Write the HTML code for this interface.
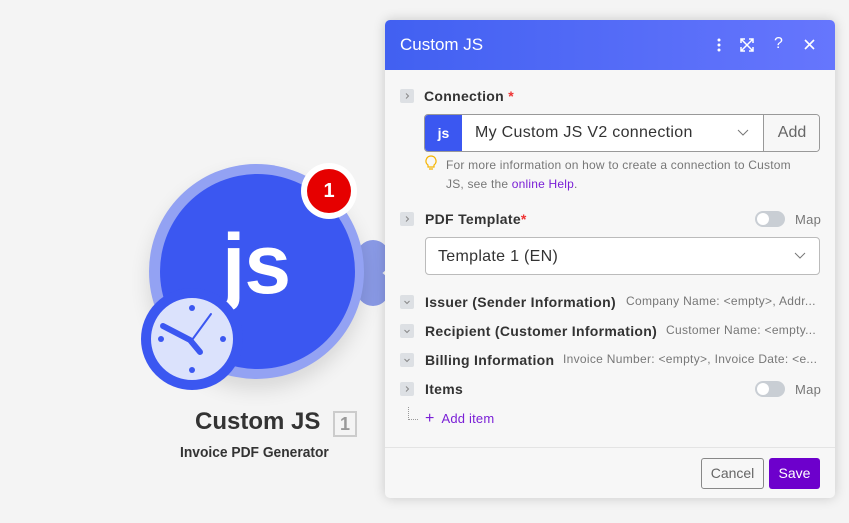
<!DOCTYPE html>
<html><head><style>
*{box-sizing:border-box;margin:0;padding:0}
body{width:849px;height:523px;background:#f4f4f4;font-family:"Liberation Sans",sans-serif;position:relative;overflow:hidden}
.abs{position:absolute}
.panel{left:385px;top:20px;width:450px;height:478px;background:#f7f7f7;border-radius:5px;box-shadow:0 0 12px rgba(0,0,0,.18);overflow:hidden}
.hdr{height:50px;background:linear-gradient(90deg,#4160f1,#6676fd);color:#fff;font-size:17px;padding:15px 0 0 15px}
.lbl{font-size:14px;font-weight:bold;color:#333;letter-spacing:.3px;white-space:nowrap}
.chev{width:14px;height:14px;background:#dde0e4;border-radius:2px}
.chev svg{position:absolute;left:3px;top:3px}
.sub{font-size:12px;color:#777;white-space:nowrap;letter-spacing:.3px}
.tog{width:30px;height:16px;border-radius:8px;background:#c9ced4}
.tog:after{content:"";position:absolute;left:2px;top:2px;width:12px;height:12px;border-radius:6px;background:#fff}
</style></head><body>
<!-- node -->
<div class="abs" style="left:356px;top:240px;width:34px;height:36px;border-radius:50%;background:#8a9ae6"></div>
<div class="abs" style="left:356px;top:270px;width:34px;height:36px;border-radius:50%;background:#8a9ae6"></div>
<div class="abs" style="left:149px;top:164px;width:215px;height:215px;border-radius:50%;background:#93a2f3;box-shadow:0 10px 20px rgba(0,0,0,.12)"></div>
<div class="abs" style="left:160px;top:174px;width:195px;height:195px;border-radius:50%;background:#3b57f1"></div>
<div class="abs" style="left:222px;top:222px;color:#fff;font-size:84px;font-weight:bold;letter-spacing:-1px;line-height:84px">js</div>
<div class="abs" style="left:301px;top:163px;width:56px;height:56px;border-radius:50%;background:#fff"></div>
<div class="abs" style="left:307px;top:169px;width:44px;height:44px;border-radius:50%;background:#e60000;color:#fff;font-weight:bold;font-size:20px;text-align:center;line-height:44px">1</div>
<svg class="abs" style="left:140px;top:287px" width="104" height="104" viewBox="0 0 104 104">
<circle cx="52" cy="52" r="46" fill="#dbe2fc" stroke="#3b57f1" stroke-width="10"/>
<circle cx="52" cy="21" r="3" fill="#3b57f1"/><circle cx="52" cy="83" r="3" fill="#3b57f1"/>
<circle cx="21" cy="52" r="3" fill="#3b57f1"/><circle cx="83" cy="52" r="3" fill="#3b57f1"/>
<path d="M23 39 L50 53 L60 65" stroke="#3b57f1" stroke-width="6" stroke-linecap="round" stroke-linejoin="round" fill="none"/>
<path d="M52 53 L71 27" stroke="#3b57f1" stroke-width="2" stroke-linecap="round"/>
</svg>
<div class="abs" style="left:195px;top:408px;font-size:24px;font-weight:bold;color:#333">Custom JS</div>
<div class="abs" style="left:333px;top:411px;width:24px;height:26px;border:2px solid #ccc;color:#999;font-weight:bold;font-size:18px;text-align:center;line-height:22px">1</div>
<div class="abs" style="left:180px;top:444px;font-size:15px;font-weight:bold;color:#333;transform:scaleX(.92);transform-origin:left">Invoice PDF Generator</div>

<div class="abs panel">
<div class="hdr">Custom JS
<svg class="abs" style="left:326px;top:17px" width="16" height="16" viewBox="0 0 16 16" fill="#fff"><circle cx="8" cy="3" r="1.5"/><circle cx="8" cy="8" r="1.5"/><circle cx="8" cy="13" r="1.5"/></svg>
<svg class="abs" style="left:355px;top:18px" width="14" height="14" viewBox="0 0 14 14" fill="none" stroke="#fff" stroke-width="1.5"><path d="M1 1L13 13M13 1L1 13M1 5V1H5M9 1H13V5M13 9V13H9M5 13H1V9"/></svg>
<span class="abs" style="left:389px;top:15px;font-size:16px">?</span>
<svg class="abs" style="left:419px;top:19px" width="11" height="11" viewBox="0 0 11 11" stroke="#fff" stroke-width="1.6"><path d="M1 1L10 10M10 1L1 10"/></svg>
</div>
<div class="abs chev" style="left:15px;top:69px"><svg width="8" height="8" viewBox="0 0 8 8"><path d="M3 1.5L5.5 4L3 6.5" stroke="#888" fill="none"/></svg></div>
<div class="abs lbl" style="left:39px;top:68px">Connection <span style="color:#e33">*</span></div>
<div class="abs" style="left:39px;top:94px;width:396px;height:38px;border:1px solid #999;border-radius:4px;background:#fff;overflow:hidden">
 <div class="abs" style="left:0;top:0;width:37px;height:36px;background:#3b57f1;color:#fff;font-weight:bold;font-size:14px;text-align:center;line-height:36px">js</div>
 <div class="abs" style="left:50px;top:9px;font-size:16px;color:#333;letter-spacing:.3px">My Custom JS V2 connection</div>
 <svg class="abs" style="left:312px;top:14px" width="12" height="8" viewBox="0 0 12 8"><path d="M1 1L6 6L11 1" stroke="#777" fill="none"/></svg>
 <div class="abs" style="left:338px;top:0;width:57px;height:36px;border-left:1px solid #999;background:#f7f7f7;color:#666;font-size:16px;text-align:center;line-height:36px">Add</div>
</div>
<svg class="abs" style="left:40px;top:135px" width="12" height="16" viewBox="0 0 12 16" fill="none" stroke="#f5b400" stroke-width="1.2"><path d="M6 1a5 5 0 0 0-3 9v2h6v-2a5 5 0 0 0-3-9zM4 14h4"/></svg>
<div class="abs" style="left:61px;top:136px;width:362px;font-size:12px;color:#777;line-height:19px;letter-spacing:.2px">For more information on how to create a connection to Custom JS, see the <span style="color:#7a1fd6">online Help</span>.</div>
<div class="abs chev" style="left:15px;top:192px"><svg width="8" height="8" viewBox="0 0 8 8"><path d="M3 1.5L5.5 4L3 6.5" stroke="#888" fill="none"/></svg></div>
<div class="abs lbl" style="left:40px;top:191px">PDF Template<span style="color:#e33">*</span></div>
<div class="abs tog" style="left:370px;top:191px"></div>
<div class="abs sub" style="left:410px;top:192px;font-size:13px">Map</div>
<div class="abs" style="left:40px;top:217px;width:395px;height:38px;border:1px solid #bbb;border-radius:4px;background:#fff">
 <div class="abs" style="left:12px;top:10px;font-size:16px;color:#333;letter-spacing:.3px">Template 1 (EN)</div>
 <svg class="abs" style="left:368px;top:14px" width="12" height="8" viewBox="0 0 12 8"><path d="M1 1L6 6L11 1" stroke="#777" fill="none"/></svg>
</div>
<div class="abs chev" style="left:15px;top:275px"><svg width="8" height="8" viewBox="0 0 8 8"><path d="M1.5 3L4 5.5L6.5 3" stroke="#888" fill="none"/></svg></div>
<div class="abs lbl" style="left:40px;top:274px">Issuer (Sender Information)</div>
<div class="abs sub" style="left:241px;top:274px">Company Name: &lt;empty&gt;, Addr...</div>
<div class="abs chev" style="left:15px;top:304px"><svg width="8" height="8" viewBox="0 0 8 8"><path d="M1.5 3L4 5.5L6.5 3" stroke="#888" fill="none"/></svg></div>
<div class="abs lbl" style="left:40px;top:303px">Recipient (Customer Information)</div>
<div class="abs sub" style="left:281px;top:303px">Customer Name: &lt;empty...</div>
<div class="abs chev" style="left:15px;top:333px"><svg width="8" height="8" viewBox="0 0 8 8"><path d="M1.5 3L4 5.5L6.5 3" stroke="#888" fill="none"/></svg></div>
<div class="abs lbl" style="left:40px;top:332px">Billing Information</div>
<div class="abs sub" style="left:178px;top:332px">Invoice Number: &lt;empty&gt;, Invoice Date: &lt;e...</div>
<div class="abs chev" style="left:15px;top:362px"><svg width="8" height="8" viewBox="0 0 8 8"><path d="M3 1.5L5.5 4L3 6.5" stroke="#888" fill="none"/></svg></div>
<div class="abs lbl" style="left:40px;top:361px">Items</div>
<div class="abs tog" style="left:370px;top:361px"></div>
<div class="abs sub" style="left:410px;top:362px;font-size:13px">Map</div>
<div class="abs" style="left:23px;top:387px;width:10px;height:13px;border-left:1px dotted #999;border-bottom:1px dotted #999"></div>
<div class="abs" style="left:40px;top:390px;font-size:13px;color:#7a1fd6;letter-spacing:.2px"><span style="font-size:16px">+</span>&nbsp; Add item</div>
<div class="abs" style="left:0;top:427px;width:450px;border-top:1px solid #e4e4e4"></div>
<div class="abs" style="left:316px;top:438px;width:63px;height:31px;border:1px solid #888;border-radius:3px;color:#666;font-size:14px;text-align:center;line-height:29px">Cancel</div>
<div class="abs" style="left:384px;top:438px;width:51px;height:31px;background:#6d00cc;border-radius:3px;color:#fff;font-size:14px;text-align:center;line-height:31px">Save</div>
</div>
</body></html>
